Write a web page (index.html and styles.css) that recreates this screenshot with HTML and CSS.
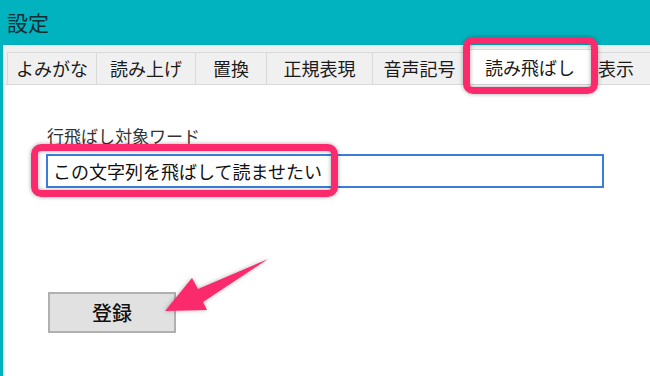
FILE: index.html
```html
<!DOCTYPE html>
<html lang="ja">
<head>
<meta charset="utf-8">
<title>設定</title>
<link rel="stylesheet" href="styles.css">
</head>
<body>
<div class="window">
  <div class="titlebar">設定</div>
  <div class="frame">
    <div class="tabs">
      <div class="tab t1">よみがな</div>
      <div class="tab t2">読み上げ</div>
      <div class="tab t3">置換</div>
      <div class="tab t4">正規表現</div>
      <div class="tab t5">音声記号</div>
      <div class="tab t6 active">読み飛ばし</div>
      <div class="tab t7">表示</div>
    </div>
    <div class="panel">
      <div class="label">行飛ばし対象ワード</div>
      <div class="input">この文字列を飛ばして読ませたい</div>
      <div class="button">登録</div>
    </div>
  </div>
  <div class="hl hl-tab"></div>
  <div class="hl hl-input"></div>
  <svg class="arrow" width="650" height="376" viewBox="0 0 650 376">
    <polygon points="165,311 192,278 198,289 268,259 203,302 207,310" fill="#fb2a6c"/>
  </svg>
</div>
</body>
</html>
```
FILE: styles.css
```css
* { box-sizing: border-box; }
html, body { margin: 0; padding: 0; }
body {
  width: 650px;
  height: 376px;
  overflow: hidden;
  background: #ffffff;
  font-family: "Noto Sans CJK JP", "Noto Sans", sans-serif;
  color: #1a1a1a;
}
.window {
  position: relative;
  width: 650px;
  height: 376px;
  display: flex;
  flex-direction: column;
}
.titlebar {
  height: 45px;
  flex: none;
  background: #00b3bf;
  color: #0d2d33;
  font-size: 21px;
  line-height: 45px;
  padding-left: 7px;
}
.frame {
  flex: 1;
  display: flex;
  flex-direction: column;
  border-left: 3px solid #00b3bf;
  background: #f0f0f0;
}
.tabs {
  flex: none;
  display: flex;
  height: 39px;
  padding: 7px 0 0 4px;
  align-items: flex-end;
}
.tab {
  flex: none;
  height: 32px;
  border: 1px solid #d9d9d9;
  border-bottom: none;
  margin-right: -1px;
  background: #f0f0f0;
  font-size: 18px;
  line-height: 30px;
  text-align: center;
  white-space: nowrap;
  overflow: hidden;
  color: #1a1a1a;
}
.t1 { width: 90px; }
.t2 { width: 100px; }
.t3 { width: 72px; }
.t4 { width: 107px; }
.t5 { width: 95px; }
.t6 { width: 132px; }
.t7 { width: 60px; text-align: left; padding-left: 4px; }
.tab.active {
  height: 35px;
  background: #ffffff;
  line-height: 34px;
  position: relative;
  z-index: 1;
  margin-left: -2px;
  margin-right: -3px;
}
.panel {
  flex: 1;
  margin-left: 2px;
  background: #ffffff;
  border-top: 1px solid #d9d9d9;
  padding: 41px 0 0 41px;
  display: flex;
  flex-direction: column;
  align-items: flex-start;
}
.label {
  font-size: 17px;
  line-height: 20px;
  color: #333333;
  padding-left: 1px;
}
.input {
  margin-top: 8px;
  width: 558px;
  height: 34px;
  border: 2px solid #3c7ddb;
  font-size: 18px;
  line-height: 30px;
  padding-left: 5px;
  color: #111111;
  white-space: nowrap;
}
.button {
  margin-top: 104px;
  margin-left: 2px;
  width: 128px;
  height: 41px;
  border: 2px solid #b0b0b0;
  background: #e1e1e1;
  font-size: 20px;
  font-weight: 500;
  line-height: 37px;
  text-align: center;
  color: #111111;
}
.hl {
  position: absolute;
  border: 7px solid #fb2a6c;
  border-radius: 10px;
  box-shadow: 0 0 4px rgba(0, 0, 0, 0.35), inset 0 0 4px rgba(0, 0, 0, 0.35);
  z-index: 2;
}
.hl-tab {
  left: 463px;
  top: 37px;
  width: 135px;
  height: 57px;
}
.hl-input {
  left: 31px;
  top: 144px;
  width: 307px;
  height: 53px;
}
.arrow {
  position: absolute;
  left: 0;
  top: 0;
  z-index: 3;
  filter: drop-shadow(0 0 2px rgba(0, 0, 0, 0.3));
  pointer-events: none;
}
```
